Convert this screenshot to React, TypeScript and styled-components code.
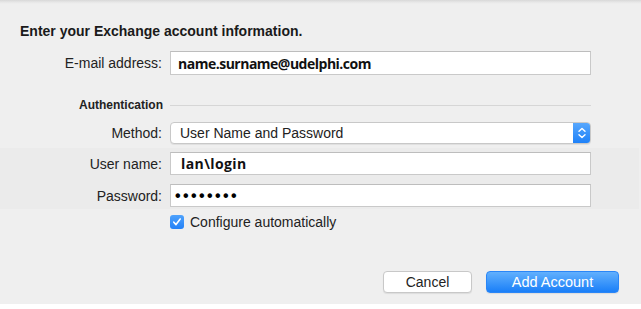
import React from "react";
import styled, { createGlobalStyle } from "styled-components";

const Global = createGlobalStyle`
  html, body { margin: 0; padding: 0; background: #ffffff; }
  body { font-family: "Liberation Sans", Arial, sans-serif; }
`;

const Window = styled.div`
  width: 641px;
  height: 304px;
  background: #efefef;
  display: flex;
  flex-direction: column;
  position: relative;
  overflow: hidden;
`;

const TopEdge = styled.div`
  height: 4px;
  background: linear-gradient(#d8d8d8, #e6e6e6 50%, #efefef);
`;

const Title = styled.div`
  margin: 19px 0 0 20px;
  font-size: 14px;
  line-height: 16px;
  font-weight: 700;
  color: #1a1a1a;
`;

const Row = styled.div<{ $top: number; $h: number }>`
  display: grid;
  grid-template-columns: 162px 421px;
  column-gap: 8px;
  align-items: center;
  margin-top: ${(p) => p.$top}px;
  height: ${(p) => p.$h}px;
`;

const Label = styled.div`
  text-align: right;
  font-size: 14px;
  color: #222;
`;

const Field = styled.div`
  box-sizing: border-box;
  height: 100%;
  background: #fff;
  border: 1px solid #c9c9c9;
  border-top-color: #bdbdbd;
  display: flex;
  align-items: center;
`;

const FieldText = styled.span<{ $pad: number; $ls: number }>`
  padding-left: ${(p) => p.$pad}px;
  font-family: "Open Sans", "DejaVu Sans", sans-serif;
  font-weight: 700;
  font-size: 14px;
  color: #111;
  letter-spacing: ${(p) => p.$ls}px;
`;

const Dots = styled.span`
  padding-left: 4px;
  font-family: "Liberation Sans", Arial, sans-serif;
  font-size: 16px;
  font-weight: 700;
  letter-spacing: 2.4px;
  color: #000;
  line-height: 1;
`;

const SectionRow = styled.div`
  display: flex;
  align-items: center;
  margin-top: 23px;
  height: 14px;
`;

const SectionLabel = styled.div`
  margin-left: 79px;
  width: 91px;
  font-size: 12px;
  font-weight: 700;
  color: #222;
`;

const Rule = styled.div`
  width: 421px;
  height: 1px;
  background: #d6d6d6;
`;

const Popup = styled.div`
  box-sizing: border-box;
  height: 100%;
  display: flex;
  align-items: stretch;
  background: #fff;
  border: 1px solid #c8c8c8;
  border-radius: 4px;
  box-shadow: 0 1px 0 rgba(0, 0, 0, 0.06);
  overflow: hidden;
`;

const PopupText = styled.div`
  flex: 1;
  display: flex;
  align-items: center;
  padding-left: 9px;
  font-size: 14px;
  color: #222;
`;

const Stepper = styled.div`
  width: 18px;
  background: linear-gradient(#5aa9fd, #1b7ff8);
  display: flex;
  align-items: center;
  justify-content: center;
  margin: -1px -1px -1px 0;
`;

const Band = styled.div`
  background: #ebebeb;
  margin-top: 4px;
  padding: 4px 0 2px;
  margin-right: 2px;
  display: flex;
  flex-direction: column;
`;

const CheckRow = styled.div`
  display: flex;
  align-items: center;
  margin: 6px 0 0 170px;
  gap: 6px;
  height: 14px;
`;

const CheckBox = styled.div`
  width: 14px;
  height: 14px;
  border-radius: 3px;
  background: linear-gradient(#4fa2fc, #2381f7);
  display: flex;
  align-items: center;
  justify-content: center;
`;

const CheckLabel = styled.span`
  font-size: 14px;
  color: #222;
`;

const Footer = styled.div`
  display: flex;
  justify-content: flex-end;
  gap: 14px;
  margin-top: auto;
  margin-bottom: 11px;
  padding-right: 22px;
`;

const Button = styled.button<{ $primary?: boolean; $w: number }>`
  box-sizing: border-box;
  width: ${(p) => p.$w}px;
  height: 22px;
  border-radius: 4px;
  font-family: "Liberation Sans", Arial, sans-serif;
  font-size: ${(p) => (p.$primary ? 14.5 : 14)}px;
  padding: 0;
  cursor: default;
  color: ${(p) => (p.$primary ? "#fff" : "#222")};
  border: 1px solid ${(p) => (p.$primary ? "#2a86f7" : "#c8c8c8")};
  background: ${(p) =>
    p.$primary ? "linear-gradient(#62b0fd, #1a7ff8)" : "#ffffff"};
  box-shadow: 0 1px 1px rgba(0, 0, 0, 0.08);
`;

const BottomStrip = styled.div`
  height: 5px;
  background: #fff;
`;

export default function App() {
  return (
    <>
      <Global />
      <Window>
        <TopEdge />
        <Title>Enter your Exchange account information.</Title>
        <Row $top={12} $h={24}>
          <Label>E-mail address:</Label>
          <Field>
            <FieldText $pad={7} $ls={-0.5}>name.surname@udelphi.com</FieldText>
          </Field>
        </Row>
        <SectionRow>
          <SectionLabel>Authentication</SectionLabel>
          <Rule />
        </SectionRow>
        <Row $top={10} $h={22}>
          <Label>Method:</Label>
          <Popup>
            <PopupText>User Name and Password</PopupText>
            <Stepper>
              <svg width="10" height="14" viewBox="0 0 10 14">
                <path d="M2 5.2 L5 2.4 L8 5.2" fill="none" stroke="#fff" strokeWidth="1.4" strokeLinecap="round" strokeLinejoin="round" />
                <path d="M2 8.8 L5 11.6 L8 8.8" fill="none" stroke="#fff" strokeWidth="1.4" strokeLinecap="round" strokeLinejoin="round" />
              </svg>
            </Stepper>
          </Popup>
        </Row>
        <Band>
          <Row $top={0} $h={23}>
            <Label>User name:</Label>
            <Field>
              <FieldText $pad={10} $ls={0.4}>lan\login</FieldText>
            </Field>
          </Row>
          <Row $top={9} $h={23}>
            <Label>Password:</Label>
            <Field>
              <Dots>••••••••</Dots>
            </Field>
          </Row>
        </Band>
        <CheckRow>
          <CheckBox>
            <svg width="10" height="10" viewBox="0 0 10 10">
              <path d="M1.8 5.2 L4 7.6 L8.2 2" fill="none" stroke="#fff" strokeWidth="1.6" strokeLinecap="round" strokeLinejoin="round" />
            </svg>
          </CheckBox>
          <CheckLabel>Configure automatically</CheckLabel>
        </CheckRow>
        <Footer>
          <Button $w={89}>Cancel</Button>
          <Button $primary $w={133}>Add Account</Button>
        </Footer>
      </Window>
      <BottomStrip />
    </>
  );
}
